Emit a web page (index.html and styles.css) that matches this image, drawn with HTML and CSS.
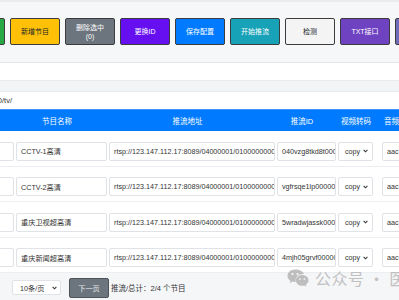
FILE: index.html
```html
<!DOCTYPE html>
<html lang="zh-CN">
<head>
<meta charset="utf-8">
<title>推流管理</title>
<link rel="stylesheet" href="styles.css">
</head>
<body>
<div class="page">
  <div class="toolbar">
    <button class="btn btn-green">导入节目</button>
    <button class="btn btn-yellow">新增节目</button>
    <button class="btn btn-gray">删除选中<br>(0)</button>
    <button class="btn btn-purple">更换ID</button>
    <button class="btn btn-blue">保存配置</button>
    <button class="btn btn-teal">开始推流</button>
    <button class="btn btn-light">检测</button>
    <button class="btn btn-violet">TXT接口</button>
    <button class="btn btn-indigo">M3U接口</button>
  </div>
  <div class="field"><span class="fv"></span></div>
  <div class="sep"></div>
  <div class="field"><span class="fv">http://127.0.0.1:8080/tv/</span></div>

  <div class="table">
    <div class="thead">
      <div class="th">序号</div>
      <div class="th sh">节目名称</div>
      <div class="th sh">推流地址</div>
      <div class="th sh">推流ID</div>
      <div class="th">视频转码</div>
      <div class="th">音频转码</div>
      <div class="th">操作</div>
    </div>

    <div class="row">
      <div class="cell"><div class="in"></div></div>
      <div class="cell"><div class="in">CCTV-1高清</div></div>
      <div class="cell"><div class="in">rtsp://123.147.112.17:8089/04000001/01000000004000000000000000000231</div></div>
      <div class="cell"><div class="in">040vzg8tkd8t0000</div></div>
      <div class="cell"><div class="sel">copy<svg class="chev" width="5" height="4" viewBox="0 0 5 4"><path d="M0.6 0.9 2.5 2.8 4.4 0.9" fill="none" stroke="#333" stroke-width="1.1"/></svg></div></div>
      <div class="cell"><div class="in aud">aac</div></div>
      <div class="cell"></div>
    </div>

    <div class="row">
      <div class="cell"><div class="in"></div></div>
      <div class="cell"><div class="in">CCTV-2高清</div></div>
      <div class="cell"><div class="in">rtsp://123.147.112.17:8089/04000001/01000000004000000000000000000232</div></div>
      <div class="cell"><div class="in">vgfrsqe1lp00000</div></div>
      <div class="cell"><div class="sel">copy<svg class="chev" width="5" height="4" viewBox="0 0 5 4"><path d="M0.6 0.9 2.5 2.8 4.4 0.9" fill="none" stroke="#333" stroke-width="1.1"/></svg></div></div>
      <div class="cell"><div class="in aud">aac</div></div>
      <div class="cell"></div>
    </div>

    <div class="row">
      <div class="cell"><div class="in"></div></div>
      <div class="cell"><div class="in">重庆卫视超高清</div></div>
      <div class="cell"><div class="in">rtsp://123.147.112.17:8089/04000001/01000000004000000000000000000233</div></div>
      <div class="cell"><div class="in">5wradwjassk0000</div></div>
      <div class="cell"><div class="sel">copy<svg class="chev" width="5" height="4" viewBox="0 0 5 4"><path d="M0.6 0.9 2.5 2.8 4.4 0.9" fill="none" stroke="#333" stroke-width="1.1"/></svg></div></div>
      <div class="cell"><div class="in aud">aac</div></div>
      <div class="cell"></div>
    </div>

    <div class="row">
      <div class="cell"><div class="in"></div></div>
      <div class="cell"><div class="in">重庆新闻超高清</div></div>
      <div class="cell"><div class="in">rtsp://123.147.112.17:8089/04000001/01000000004000000000000000000234</div></div>
      <div class="cell"><div class="in">4mjh05grvf00000</div></div>
      <div class="cell"><div class="sel">copy<svg class="chev" width="5" height="4" viewBox="0 0 5 4"><path d="M0.6 0.9 2.5 2.8 4.4 0.9" fill="none" stroke="#333" stroke-width="1.1"/></svg></div></div>
      <div class="cell"><div class="in aud">aac</div></div>
      <div class="cell"></div>
    </div>
  </div>

  <div class="pager">
    <div class="psel">10条/页<svg class="chev" width="5" height="4" viewBox="0 0 5 4"><path d="M0.6 0.9 2.5 2.8 4.4 0.9" fill="none" stroke="#333" stroke-width="1.1"/></svg></div>
    <button class="pbtn">下一页</button>
    <span class="ptext">推流/总计：2/4 个节目</span>
  </div>
</div>

<div class="watermark">
  <svg width="22" height="18" viewBox="0 0 22 18">
    <path d="M8 0.5C3.9 0.5 0.5 3.3 0.5 6.8c0 2 1.1 3.7 2.8 4.9L2.6 14l2.7-1.4c.9.3 1.8.4 2.7.4.3 0 .6 0 .9 0-.2-.6-.3-1.2-.3-1.8 0-3.5 3.3-6.3 7.4-6.3.3 0 .6 0 .9.1C16.2 2.5 12.5.5 8 .5z" fill="#b9b9b9"/>
    <circle cx="5.5" cy="5" r="1" fill="#fff"/>
    <circle cx="10.5" cy="5" r="1" fill="#fff"/>
    <path d="M21.5 11.4c0-2.9-2.8-5.3-6.3-5.3s-6.3 2.4-6.3 5.3 2.8 5.3 6.3 5.3c.7 0 1.4-.1 2.1-.3l2.1 1.1-.6-1.9c1.6-1 2.7-2.5 2.7-4.2z" fill="#b9b9b9"/>
    <circle cx="13" cy="10" r=".85" fill="#fff"/>
    <circle cx="17.4" cy="10" r=".85" fill="#fff"/>
  </svg>
  <span class="wtext">公众号 · 医</span>
</div>
</body>
</html>
```

FILE: styles.css
```css
* {
  box-sizing: border-box;
  margin: 0;
  padding: 0;
}

html,
body {
  width: 399px;
  height: 300px;
  overflow: hidden;
}

body {
  position: relative;
  background: #f5f6f8;
  font-family: "Liberation Sans", "Noto Sans CJK SC", sans-serif;
  color: #333;
}

.page {
  margin-left: -60px;
  width: 540px;
}

/* toolbar */
.toolbar {
  display: flex;
  gap: 5px;
  padding: 16px 0 17px 15px;
  background: #f6f7f9;
  border-top: 2px solid #eaecef;
  border-bottom: 1px solid #e3e5e8;
}

.btn {
  flex: none;
  width: 50px;
  height: 27px;
  display: flex;
  align-items: center;
  justify-content: center;
  text-align: center;
  border: 1px solid #3c3c3c;
  border-radius: 2px;
  font-family: "Liberation Sans", "Noto Sans CJK SC", sans-serif;
  font-size: 7px;
  line-height: 9px;
  color: #fff;
}

.btn-green { background: #28a745; }
.btn-yellow { background: #ffc107; color: #212529; }
.btn-gray { background: #6c757d; }
.btn-purple { background: #6610f2; }
.btn-blue { background: #007bff; }
.btn-teal { background: #17a2b8; }
.btn-light { background: #f4f4f4; color: #212529; }
.btn-violet { background: #6f42c1; }
.btn-indigo { background: #6c6cb9; }

/* settings fields */
.field {
  height: 17px;
  background: #fff;
  display: flex;
  align-items: center;
}

.fv {
  width: 72px;
  display: flex;
  justify-content: flex-end;
  white-space: nowrap;
  font-size: 7.5px;
  color: #333;
}

.sep {
  height: 12px;
  background: #f3f4f6;
  border-top: 1px solid #e8eaed;
  border-bottom: 1px solid #e8eaed;
}

/* table */
.table {
  background: #fff;
}

.thead,
.row {
  display: grid;
  grid-template-columns: 75px 93px 168px 61px 38px 48px 57px;
}

.thead {
  height: 22px;
  background: #007bff;
  align-items: center;
  border-top: 1px solid #3d95ff;
}

.th {
  text-align: center;
  color: #fff;
  font-size: 7.5px;
  white-space: nowrap;
}

.th.sh {
  padding-right: 9px;
}

.row {
  height: 35.5px;
  padding-top: 10.5px;
  align-items: start;
  border-bottom: 1px solid #eceef1;
  background: #fff;
}

.cell {
  min-width: 0;
}

.in,
.sel {
  height: 19px;
  display: flex;
  align-items: center;
  white-space: nowrap;
  overflow: hidden;
  background: #fff;
  border: 1px solid #dfe2e6;
  border-radius: 2px;
  font-size: 7.2px;
  color: #333;
}

.in {
  margin: 0 1px;
  padding-left: 4px;
}

.in.aud {
  margin-left: 7px;
  margin-right: 0;
}

.sel {
  width: 35px;
  margin-left: 1px;
  padding: 0 4px 0 6px;
  justify-content: space-between;
}

.chev {
  flex: none;
}

/* pager */
.pager {
  display: flex;
  align-items: center;
  height: 27px;
  padding: 2px 0 0 72px;
}

.psel {
  width: 49px;
  height: 15px;
  display: flex;
  align-items: center;
  justify-content: space-between;
  padding: 0 3px 0 7px;
  background: #fff;
  border: 1px solid #dfe2e6;
  border-radius: 2px;
  font-size: 7.2px;
  color: #333;
}

.pbtn {
  margin-left: 8px;
  width: 40px;
  height: 20px;
  background: #6c757d;
  border: 1px solid #4d5359;
  border-radius: 2px;
  color: #e4e6e8;
  font-family: "Liberation Sans", "Noto Sans CJK SC", sans-serif;
  font-size: 7.2px;
}

.ptext {
  margin-left: 2px;
  font-size: 7.5px;
  color: #333;
  white-space: nowrap;
}

/* watermark overlay */
.watermark {
  position: absolute;
  left: 287px;
  top: 266px;
  display: flex;
  align-items: center;
  gap: 6px;
  white-space: nowrap;
  opacity: 0.9;
}

.wtext {
  font-family: "Noto Sans CJK SC", sans-serif;
  font-size: 16px;
  color: #bcbcbc;
  letter-spacing: 0.5px;
}
```
